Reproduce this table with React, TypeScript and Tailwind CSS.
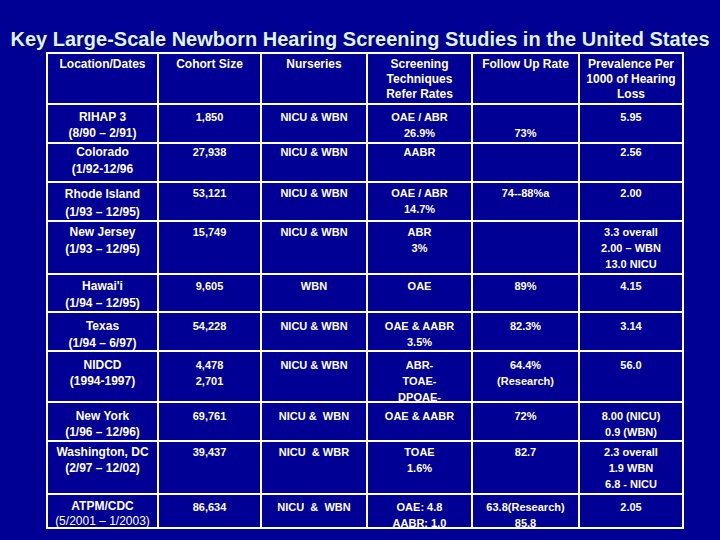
const HEAD = ["Location/Dates", "Cohort Size", "Nurseries", "Screening\nTechniques\nRefer Rates", "Follow Up Rate", "Prevalence Per\n1000 of Hearing\nLoss"];

// pt = first-line offset in each row, lh = line spacing of the location cell
const ROWS = [
  { pt: "pt-[4px]", lh: "leading-[16px]", cells: ["RIHAP 3\n(8/90 – 2/91)", "1,850", "NICU & WBN", "OAE / ABR\n26.9%", "\n73%", "5.95"] },
  { pt: "pt-[0px]", lh: "leading-[17px]", cells: ["Colorado\n(1/92-12/96", "27,938", "NICU & WBN", "AABR", "", "2.56"] },
  { pt: "pt-[2px]", lh: "leading-[18px]", cells: ["Rhode Island\n(1/93 – 12/95)", "53,121", "NICU & WBN", "OAE / ABR\n14.7%", "74--88%a", "2.00"] },
  { pt: "pt-[2px]", lh: "leading-[17px]", cells: ["New Jersey\n(1/93 – 12/95)", "15,749", "NICU & WBN", "ABR\n3%", "", "3.3 overall\n2.00 – WBN\n13.0 NICU"] },
  { pt: "pt-[3px]", lh: "leading-[17px]", cells: ["Hawai'i\n(1/94 – 12/95)", "9,605", "WBN", "OAE", "89%", "4.15"] },
  { pt: "pt-[5px]", lh: "leading-[17px]", cells: ["Texas\n(1/94 – 6/97)", "54,228", "NICU & WBN", "OAE & AABR\n3.5%", "82.3%", "3.14"] },
  { pt: "pt-[5px]", lh: "leading-[16px]", cells: ["NIDCD\n(1994-1997)", "4,478\n2,701", "NICU & WBN", "ABR-\nTOAE-\nDPOAE-", "64.4%\n(Research)", "56.0"] },
  { pt: "pt-[5px]", lh: "leading-[16px]", cells: ["New York\n(1/96 – 12/96)", "69,761", "NICU &  WBN", "OAE & AABR", "72%", "8.00 (NICU)\n0.9 (WBN)"] },
  { pt: "pt-[2px]", lh: "leading-[16px]", cells: ["Washington, DC\n(2/97 – 12/02)", "39,437", "NICU  & WBR", "TOAE\n1.6%", "82.7", "2.3 overall\n1.9 WBN\n6.8 - NICU"] },
  { pt: "pt-[4px]", lh: "leading-[15px]", cells: ["ATPM/CDC\n(5/2001 – 1/2003)", "86,634", "NICU  &  WBN", "OAE: 4.8\nAABR: 1.0", "63.8(Research)\n85.8", "2.05"] },
];

function Lines({ text }: { text: string }) {
  return (
    <>
      {text.split("\n").map((l, i) => (
        <div key={i} className={`whitespace-pre ${l === "(5/2001 – 1/2003)" ? "font-normal" : ""}`}>
          {l || "\u00a0"}
        </div>
      ))}
    </>
  );
}

export default function App() {
  return (
    <div className="w-[720px] h-[540px] bg-[#000094] overflow-hidden font-['Liberation_Sans',Arial,sans-serif] font-bold">
      <h1 className="pt-[27px] text-center text-[20px] leading-[24px] text-[#dff1ff] [text-shadow:1px_1px_0_#000040]">
        Key Large-Scale Newborn Hearing Screening Studies in the United States
      </h1>

      <div className="ml-[46px] mt-px w-fit border-2 border-white bg-white grid gap-[2px] grid-cols-[109px_101px_104px_103px_105px_102px] grid-rows-[49px_37px_37px_37px_51px_36px_37px_49px_37px_51px_32px] text-white text-center">
        {HEAD.map((h, i) => (
          <div key={i} className="bg-[#000094] pt-[3px] text-[12px] leading-[15px]">
            <Lines text={h} />
          </div>
        ))}
        {ROWS.map((r, ri) =>
          r.cells.map((c, ci) => (
            <div
              key={`${ri}-${ci}`}
              className={`bg-[#000094] ${r.pt} ${ci === 0 ? `text-[12px] ${r.lh}` : "text-[11px] leading-[16px]"}`}
            >
              <Lines text={c} />
            </div>
          ))
        )}
      </div>
    </div>
  );
}
